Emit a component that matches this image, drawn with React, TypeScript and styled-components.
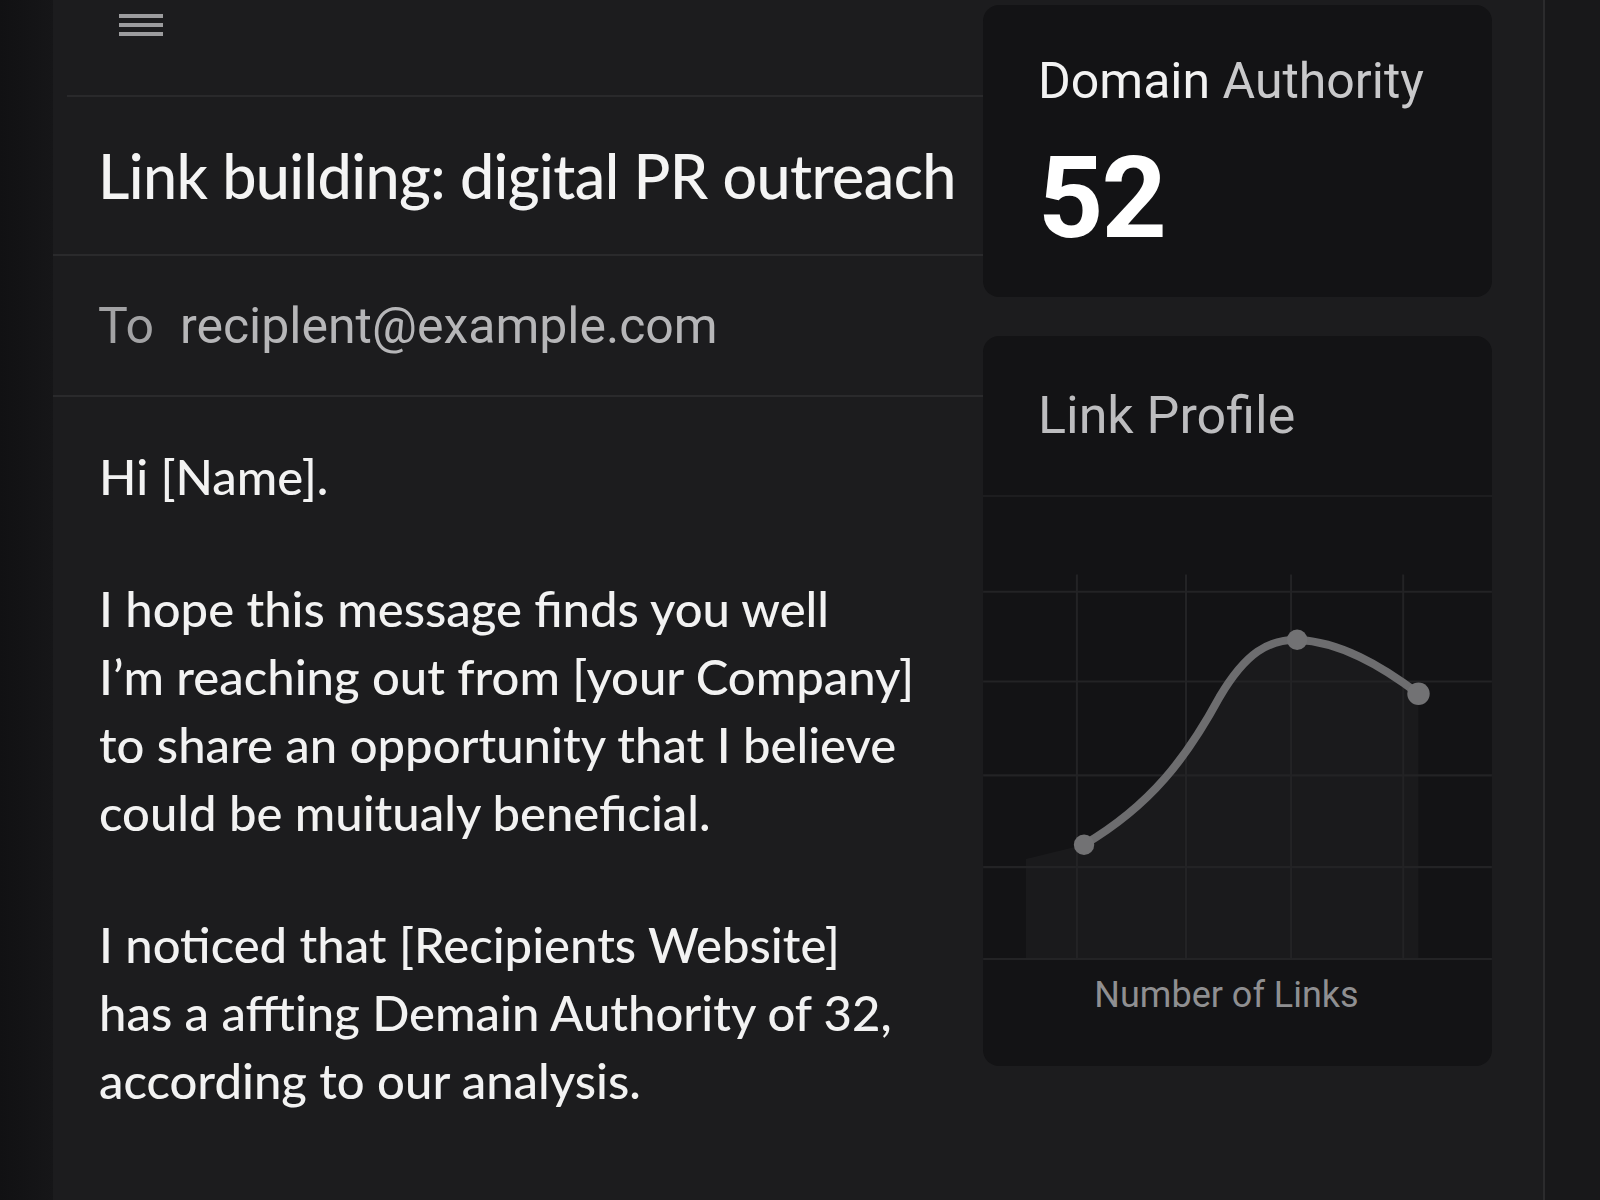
import React from "react";
import styled, { createGlobalStyle } from "styled-components";

const GlobalStyle = createGlobalStyle`
  html, body {
    margin: 0;
    padding: 0;
    background: #141416;
  }
  * {
    box-sizing: border-box;
  }
`;

const Page = styled.div`
  display: grid;
  grid-template-columns: 53px 1fr 57px;
  width: 1600px;
  height: 1200px;
  overflow: hidden;
  background: #141416;
`;

const LeftRail = styled.div`
  background: linear-gradient(90deg, #111113 0%, #161618 100%);
`;

const RightRail = styled.div`
  background: #18181a;
  border-left: 2px solid #2b2b2d;
`;

const Panel = styled.div`
  display: flex;
  background: #1c1c1e;
  padding-right: 51px;
`;

const MailColumn = styled.div`
  width: 930px;
  display: flex;
  flex-direction: column;
`;

const Toolbar = styled.div`
  height: 97px;
  margin-left: 14px;
  padding: 13px 0 0 52px;
  border-bottom: 2px solid #29292b;
`;

const Row = styled.div<{ $height: number }>`
  height: ${(p) => p.$height}px;
  display: flex;
  align-items: center;
  padding-left: 45px;
  border-bottom: 2px solid #2a2a2c;
`;

const Subject = styled.h1`
  margin: 0;
  font-family: Lato, "Noto Sans", sans-serif;
  font-weight: 500;
  font-size: 61px;
  letter-spacing: -0.6px;
  color: #f4f4f4;
`;

const ToLabel = styled.span`
  font-family: Roboto, "Liberation Sans", sans-serif;
  font-size: 50px;
  color: #a2a2a4;
  margin-right: 26px;
`;

const Address = styled.span`
  font-family: Roboto, "Liberation Sans", sans-serif;
  font-size: 50px;
  color: #b6b6b8;
`;

const Body = styled.div`
  padding: 45px 0 0 46px;
  font-family: Lato, "Noto Sans", sans-serif;
  font-weight: 500;
  font-size: 49px;
  line-height: 68px;
  color: #f2f2f2;
`;

const Paragraph = styled.p`
  margin: 0 0 64px;
`;

const SideColumn = styled.div`
  width: 509px;
  padding-top: 5px;
  display: flex;
  flex-direction: column;
  gap: 39px;
`;

const Card = styled.div<{ $height: number }>`
  height: ${(p) => p.$height}px;
  background: #131315;
  border-radius: 16px;
  display: flex;
  flex-direction: column;
`;

const StatBody = styled.div`
  padding: 47px 0 0 55px;
  font-family: Roboto, "Liberation Sans", sans-serif;
`;

const StatLabel = styled.div`
  font-size: 50px;
  line-height: 58px;
  color: #f2f2f2;

  span {
    color: #c9c9cb;
  }
`;

const StatValue = styled.div`
  margin-top: 28px;
  font-size: 114px;
  line-height: 120px;
  font-weight: 700;
  color: #ffffff;
  letter-spacing: -2px;
`;

const CardHeader = styled.div`
  height: 161px;
  display: flex;
  align-items: center;
  padding-left: 55px;
  border-bottom: 2px solid #1d1d1f;
  font-family: Roboto, "Liberation Sans", sans-serif;
  font-size: 52px;
  color: #bdbdbf;
`;

const ChartLabel = styled.div`
  margin-top: 10px;
  padding-right: 22px;
  text-align: center;
  font-family: Roboto, "Liberation Sans", sans-serif;
  font-size: 36px;
  color: #8f8f91;
`;

const MenuIcon = () => (
  <svg width="44" height="26" viewBox="0 0 44 26">
    <g stroke="#9c9c9e" strokeWidth="4">
      <line x1="0" y1="3" x2="44" y2="3" />
      <line x1="0" y1="12" x2="44" y2="12" />
      <line x1="0" y1="21" x2="44" y2="21" />
    </g>
  </svg>
);

// chart drawn in card-relative reference units
const LinkChart = () => {
  const hLines = [93, 181, 273, 363, 453];
  const vLines = [92, 199, 302, 412];
  const curve =
    "M99,341 C165,302 200,255 232,196 C258,152 280,140 308,140 C350,142 390,165 427,193";
  return (
    <svg width="509" height="467" viewBox="0 0 499 458">
      <path
        d={`${curve} L427,453 L42,453 L42,355 Z`}
        fill="rgba(255,255,255,0.03)"
      />
      <g stroke="#232325" strokeWidth="2">
        {hLines.map((y) => (
          <line key={y} x1="0" y1={y} x2="499" y2={y} />
        ))}
        {vLines.map((x) => (
          <line key={x} x1={x} y1="76" x2={x} y2="453" />
        ))}
      </g>
      <path d={curve} fill="none" stroke="#6d6d6f" strokeWidth="8" strokeLinecap="round" />
      <g fill="#727274">
        <circle cx="99" cy="341" r="10" />
        <circle cx="308" cy="140" r="10" />
        <circle cx="427" cy="193" r="11" />
      </g>
    </svg>
  );
};

const App: React.FC = () => {
  return (
    <>
      <GlobalStyle />
      <Page>
        <LeftRail />
        <Panel>
          <MailColumn>
            <Toolbar>
              <MenuIcon />
            </Toolbar>
            <Row $height={159}>
              <Subject>Link building: digital PR outreach</Subject>
            </Row>
            <Row $height={141}>
              <ToLabel>To</ToLabel>
              <Address>reciplent@example.com</Address>
            </Row>
            <Body>
              <Paragraph>Hi [Name].</Paragraph>
              <Paragraph>
                I hope this message finds you well
                <br />
                I’m reaching out from [your Company]
                <br />
                to share an opportunity that I believe
                <br />
                could be muitualy beneficial.
              </Paragraph>
              <Paragraph>
                I noticed that [Recipients Website]
                <br />
                has a affting Demain Authority of 32,
                <br />
                according to our analysis.
              </Paragraph>
            </Body>
          </MailColumn>
          <SideColumn>
            <Card $height={292}>
              <StatBody>
                <StatLabel>
                  Domain <span>Authority</span>
                </StatLabel>
                <StatValue>52</StatValue>
              </StatBody>
            </Card>
            <Card $height={730}>
              <CardHeader>Link Profile</CardHeader>
              <LinkChart />
              <ChartLabel>Number of Links</ChartLabel>
            </Card>
          </SideColumn>
        </Panel>
        <RightRail />
      </Page>
    </>
  );
};

export default App;
